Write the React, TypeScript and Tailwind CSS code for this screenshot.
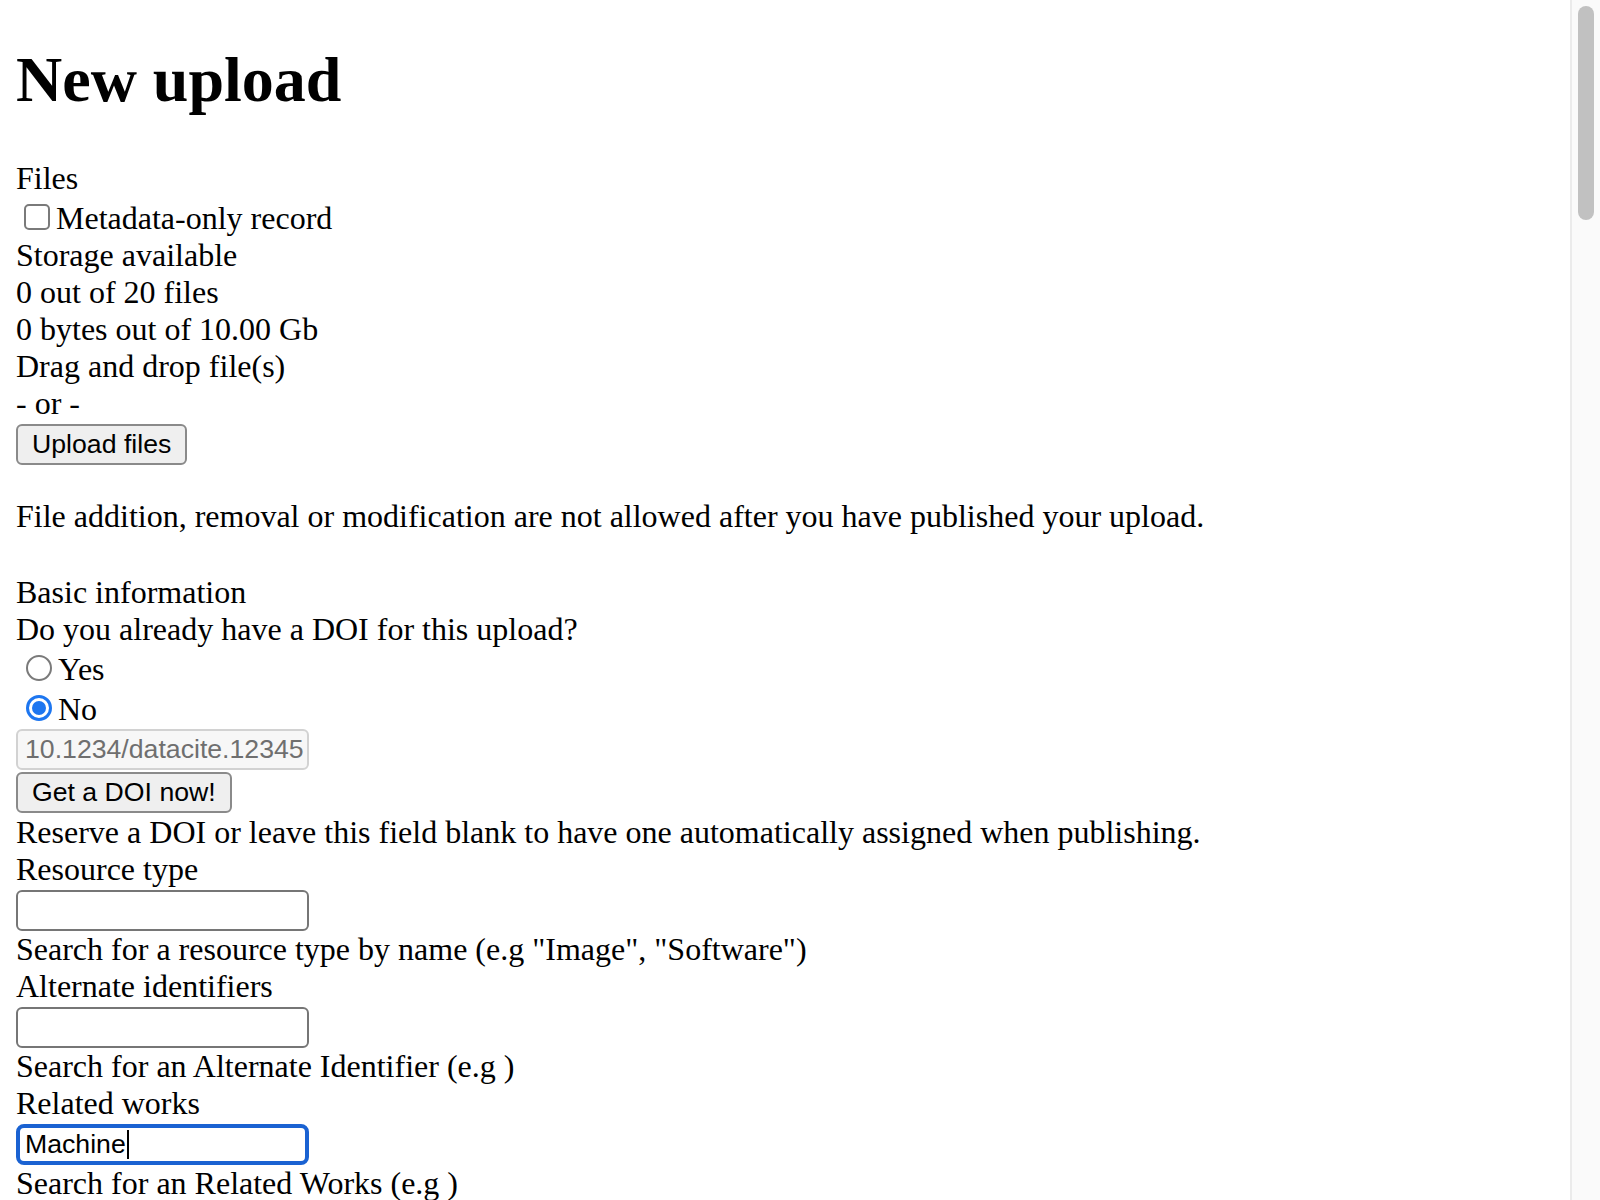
export default function App() {
  const sans = "font-['Liberation_Sans','Arial',sans-serif]";
  return (
    <div className="flex h-[1200px] w-[1600px] overflow-hidden bg-white text-black font-['Liberation_Serif','Times_New_Roman',serif]">
      <main className="min-w-0 flex-1 px-[16px] text-[32px] leading-[37px]">
        <h1 className="mt-[43px] mb-[43px] text-[64px] leading-[74px] font-bold">New upload</h1>

        <div>Files</div>
        <label className="flex h-[40px] items-start">
          <span className="ml-[8px] mr-[6px] mt-[7px] h-[26px] w-[26px] shrink-0 rounded-[5px] border-2 border-[#7a7a7a] bg-white" />
          <span className="mt-[3px]">Metadata-only record</span>
        </label>
        <div>Storage available</div>
        <div>0 out of 20 files</div>
        <div>0 bytes out of 10.00 Gb</div>
        <div>Drag and drop file(s)</div>
        <div>- or -</div>
        <div className="pt-[2px]">
          <button
            type="button"
            className={`flex h-[41px] items-center rounded-[6px] border-2 border-[#8a8a8a] bg-[#efefef] px-[14px] text-[26.67px] leading-none text-black ${sans}`}
          >
            Upload files
          </button>
        </div>

        <p className="mt-[33px]">
          File addition, removal or modification are not allowed after you have published your upload.
        </p>

        <div className="mt-[39px]">Basic information</div>
        <div>Do you already have a DOI for this upload?</div>
        <label className="flex h-[40px] items-start">
          <span className="ml-[10px] mr-[6px] mt-[7px] h-[26px] w-[26px] shrink-0 rounded-full border-2 border-[#7a7a7a] bg-white" />
          <span className="mt-[3px]">Yes</span>
        </label>
        <label className="flex h-[39px] items-start">
          <span className="ml-[10px] mr-[6px] mt-[7px] flex h-[26px] w-[26px] shrink-0 items-center justify-center rounded-full border-[3px] border-[#1d76f0] bg-white">
            <span className="h-[14px] w-[14px] rounded-full bg-[#1d76f0]" />
          </span>
          <span className="mt-[3px]">No</span>
        </label>
        <div
          className={`mt-[2px] flex h-[41px] w-[293px] items-center overflow-hidden whitespace-nowrap rounded-[6px] border-2 border-[#d2d2d2] bg-[#f7f7f7] pl-[7px] text-[26.67px] leading-none text-[#6f6f6f] ${sans}`}
        >
          10.1234/datacite.12345
        </div>
        <div className="mt-[2px]">
          <button
            type="button"
            className={`flex h-[41px] items-center rounded-[6px] border-2 border-[#8a8a8a] bg-[#efefef] px-[14px] text-[26.67px] leading-none text-black ${sans}`}
          >
            Get a DOI now!
          </button>
        </div>
        <div className="mt-[1px]">Reserve a DOI or leave this field blank to have one automatically assigned when publishing.</div>

        <div>Resource type</div>
        <div className="mt-[2px] h-[41px] w-[293px] rounded-[6px] border-2 border-[#767676] bg-white" />
        <div>Search for a resource type by name (e.g "Image", "Software")</div>

        <div>Alternate identifiers</div>
        <div className="mt-[2px] h-[41px] w-[293px] rounded-[6px] border-2 border-[#767676] bg-white" />
        <div>Search for an Alternate Identifier (e.g )</div>

        <div>Related works</div>
        <div
          className={`mt-[2px] flex h-[41px] w-[293px] items-center rounded-[8px] border-[4px] border-[#1a62d2] bg-white pl-[5px] text-[26.67px] leading-none text-black ${sans}`}
        >
          <span>Machine</span>
          <span className="ml-[1px] h-[29px] w-[2px] bg-black" />
        </div>
        <div>Search for an Related Works (e.g )</div>
      </main>

      <aside className="h-full w-[30px] shrink-0 border-l-2 border-[#ebebeb] bg-[#fafafa]">
        <div className="ml-[6px] mt-[6px] h-[214px] w-[16px] rounded-full bg-[#c1c1c1]" />
      </aside>
    </div>
  );
}
